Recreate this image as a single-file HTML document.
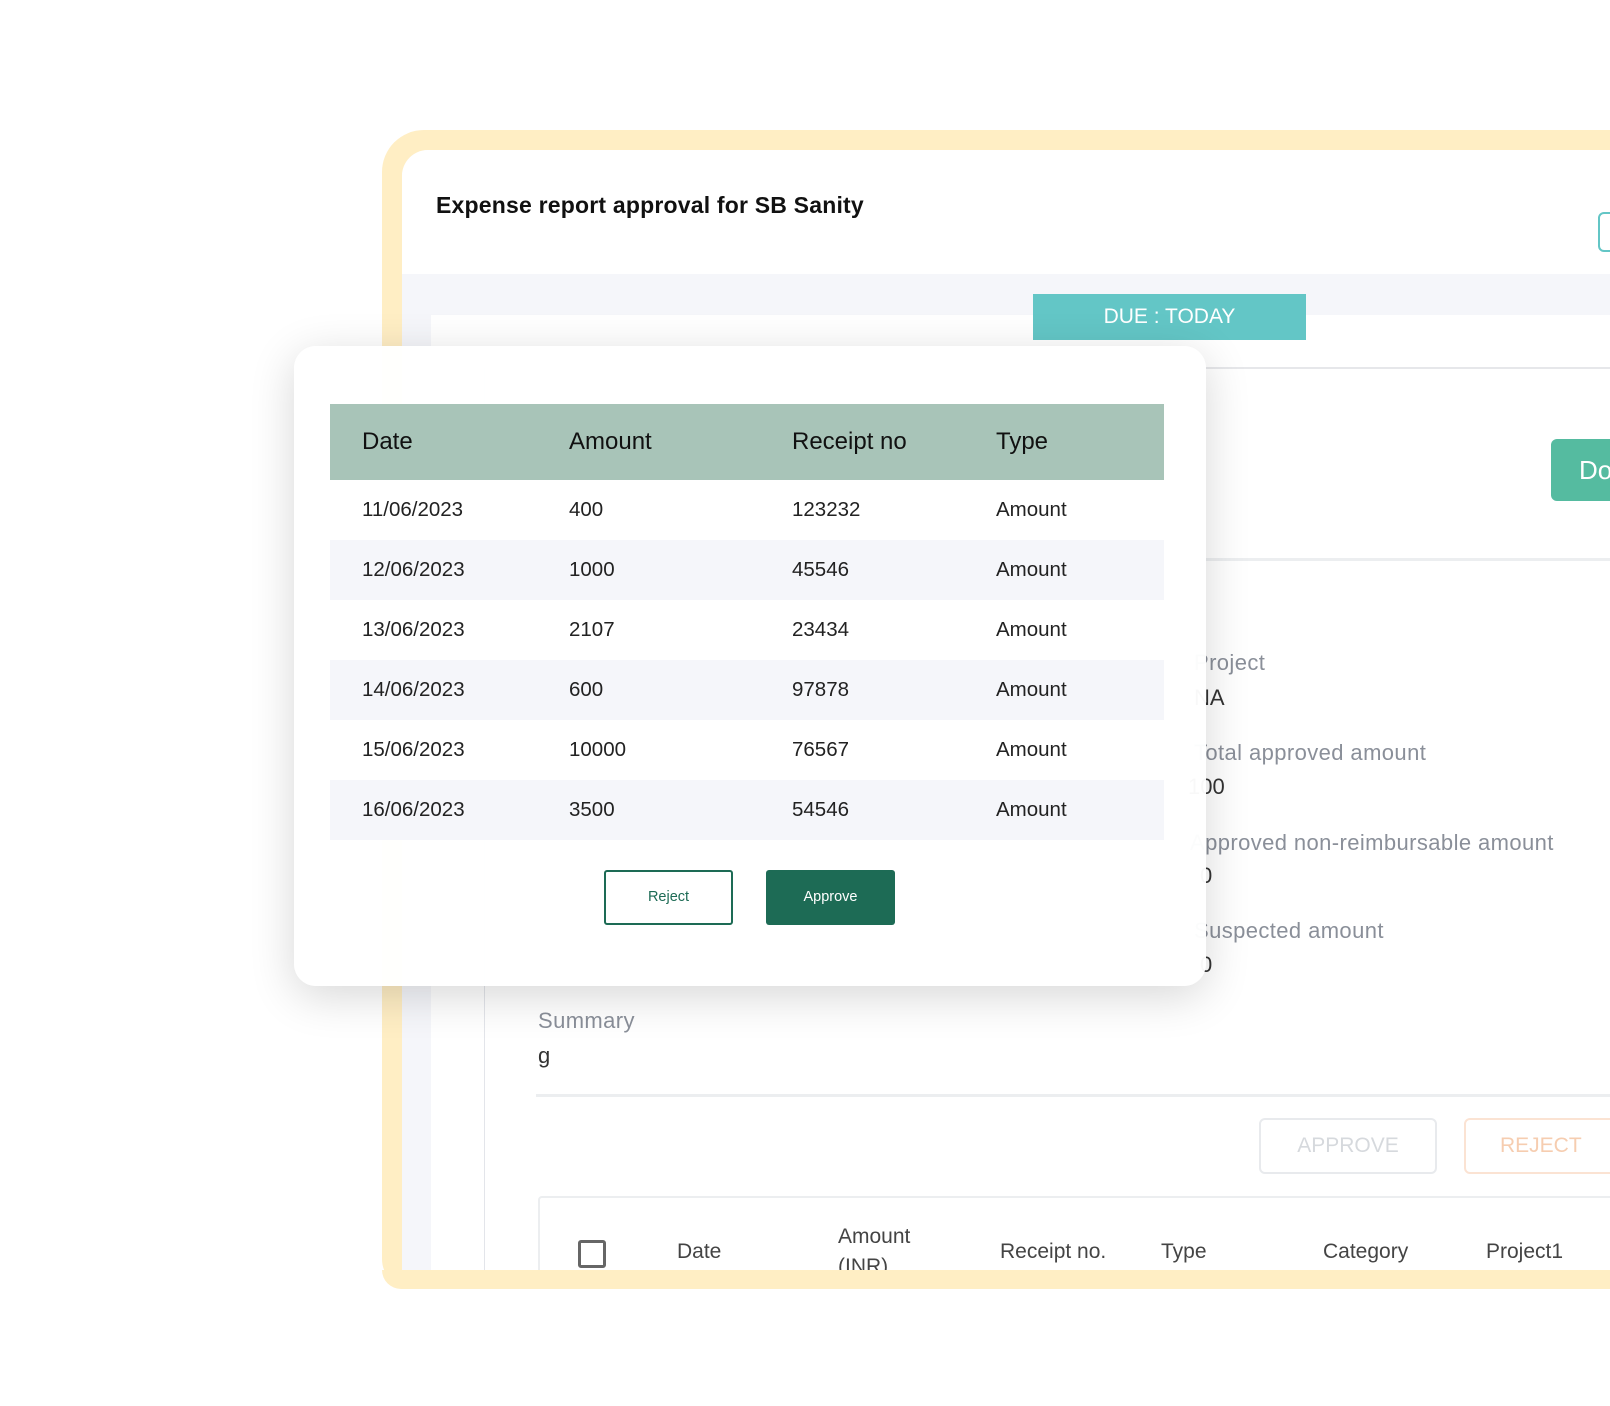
<!DOCTYPE html>
<html><head><meta charset="utf-8"><style>
*{margin:0;padding:0;box-sizing:border-box}
body{width:1610px;height:1406px;background:#fff;position:relative;overflow:hidden;font-family:"Liberation Sans",sans-serif}
.a{position:absolute}
.frame{left:382px;top:130px;width:1300px;height:1159px;background:#ffeec4;border-radius:42px 0 0 30px}
.inner{left:402px;top:150px;width:1300px;height:1120px;background:#f5f6fa;border-radius:26px 0 0 0;overflow:hidden}
.lbl{color:#8a8f99;font-size:22px;letter-spacing:0.4px}
.val{color:#333;font-size:22px}
.card{left:294px;top:346px;width:912px;height:640px;background:rgba(255,255,255,0.97);border-radius:22px;box-shadow:0 10px 45px rgba(0,0,0,0.16)}
table{border-collapse:collapse;position:absolute;left:36px;top:58px;width:834px}
th{background:#a8c4b8;height:76px;text-align:left;font-size:24px;font-weight:normal;color:#111}
td{height:60px;font-size:20.5px;color:#222}
th:first-child,td:first-child{padding-left:32px}
tr:nth-child(odd) td{background:#f5f6fa}
.c1{width:239px}.c2{width:223px}.c3{width:204px}
</style></head><body>
<div class="a frame"></div>
<div class="a inner">
  <div class="a" style="left:0;top:0;width:1300px;height:124px;background:#fff"></div>
  <div class="a" style="left:34px;top:42px;font-size:23px;font-weight:bold;color:#111;letter-spacing:0.2px">Expense report approval for SB Sanity</div>
  <div class="a" style="left:1196px;top:62px;width:20px;height:40px;border:2px solid #63c6c6;border-radius:6px"></div>
  <div class="a" style="left:29px;top:165px;width:1300px;height:960px;background:#fff"></div>
  <div class="a" style="left:82px;top:218px;width:1300px;height:1000px;background:#fff;border-left:1px solid #e3e5ea"></div>
  <div class="a" style="left:631px;top:144px;width:273px;height:46px;background:#63c6c6;color:#fff;font-size:21px;text-align:center;line-height:46px">DUE : TODAY</div>
  <div class="a" style="left:700px;top:217px;width:700px;height:2px;background:#e6e7ea"></div>
  <div class="a" style="left:1149px;top:289px;width:100px;height:62px;background:#55bba0;border-radius:6px;color:#fff;font-size:26px;line-height:62px;padding-left:28px">Do</div>
  <div class="a" style="left:700px;top:408px;width:700px;height:3px;background:#eceef0"></div>
  <div class="a lbl" style="left:792px;top:500px">Project</div>
  <div class="a val" style="left:792px;top:535px">NA</div>
  <div class="a lbl" style="left:792px;top:590px">Total approved amount</div>
  <div class="a val" style="left:786px;top:624px">100</div>
  <div class="a lbl" style="left:788px;top:680px">Approved non-reimbursable amount</div>
  <div class="a val" style="left:798px;top:713px">0</div>
  <div class="a lbl" style="left:792px;top:768px">Suspected amount</div>
  <div class="a val" style="left:798px;top:802px">0</div>
  <div class="a lbl" style="left:136px;top:858px">Summary</div>
  <div class="a val" style="left:136px;top:893px">g</div>
  <div class="a" style="left:134px;top:944px;width:1200px;height:3px;background:#eceef0"></div>
  <div class="a" style="left:857px;top:968px;width:178px;height:56px;border:2px solid #e8eaed;border-radius:6px;color:#d6d9dd;font-size:21px;text-align:center;line-height:52px">APPROVE</div>
  <div class="a" style="left:1062px;top:968px;width:200px;height:56px;border:2px solid #fbe3d3;border-radius:6px;color:#f6cdb0;font-size:21px;line-height:52px;padding-left:34px">REJECT</div>
  <div class="a" style="left:136px;top:1046px;width:1200px;height:200px;border:2px solid #eceef0;border-radius:4px;background:#fff"></div>
  <div class="a" style="left:176px;top:1090px;width:28px;height:28px;border:3px solid #666;border-radius:3px"></div>
  <div class="a" style="left:275px;top:1090px;font-size:21px;color:#444">Date</div>
  <div class="a" style="left:436px;top:1072px;font-size:21px;color:#444;line-height:30px">Amount<br>(INR)</div>
  <div class="a" style="left:598px;top:1090px;font-size:21px;color:#444">Receipt no.</div>
  <div class="a" style="left:759px;top:1090px;font-size:21px;color:#444">Type</div>
  <div class="a" style="left:921px;top:1090px;font-size:21px;color:#444">Category</div>
  <div class="a" style="left:1084px;top:1090px;font-size:21px;color:#444">Project1</div>
</div>
<div class="a" style="left:382px;top:1270px;width:1300px;height:19px;background:#ffeec4;border-radius:0 0 0 30px"></div>
<div class="a card">
<table>
<tr><th class="c1">Date</th><th class="c2">Amount</th><th class="c3">Receipt no</th><th>Type</th></tr>
<tr><td style="background:#fff">11/06/2023</td><td style="background:#fff">400</td><td style="background:#fff">123232</td><td style="background:#fff">Amount</td></tr>
<tr><td>12/06/2023</td><td>1000</td><td>45546</td><td>Amount</td></tr>
<tr><td style="background:#fff">13/06/2023</td><td style="background:#fff">2107</td><td style="background:#fff">23434</td><td style="background:#fff">Amount</td></tr>
<tr><td>14/06/2023</td><td>600</td><td>97878</td><td>Amount</td></tr>
<tr><td style="background:#fff">15/06/2023</td><td style="background:#fff">10000</td><td style="background:#fff">76567</td><td style="background:#fff">Amount</td></tr>
<tr><td>16/06/2023</td><td>3500</td><td>54546</td><td>Amount</td></tr>
</table>
<div class="a" style="left:310px;top:524px;width:129px;height:55px;border:2px solid #1d6b55;border-radius:3px;color:#1d6b55;font-size:14.5px;text-align:center;line-height:51px">Reject</div>
<div class="a" style="left:472px;top:524px;width:129px;height:55px;background:#1d6b55;border-radius:3px;color:#fff;font-size:14.5px;text-align:center;line-height:55px">Approve</div>
</div>
</body></html>
